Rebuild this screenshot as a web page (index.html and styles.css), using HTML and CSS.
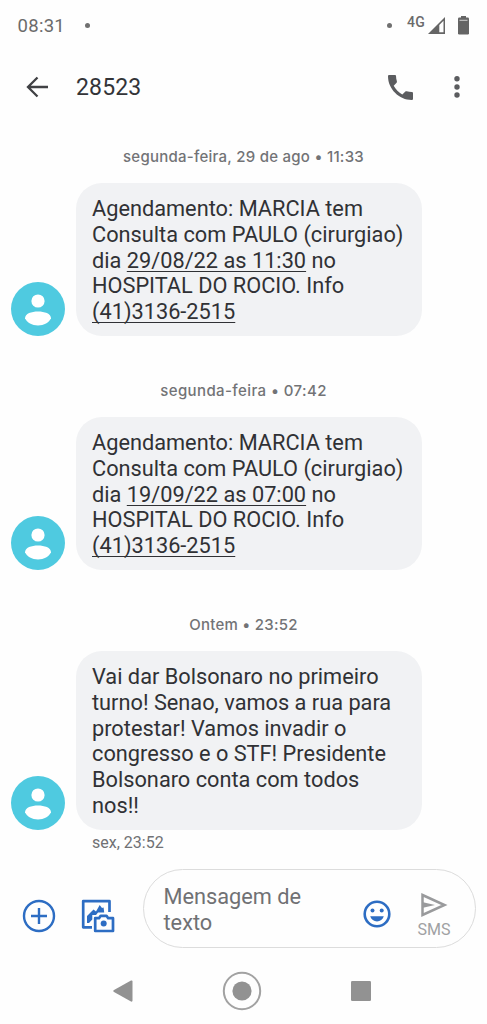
FILE: index.html
```html
<!DOCTYPE html>
<html lang="pt-BR">
<head>
<meta charset="utf-8">
<title>28523</title>
<link rel="stylesheet" href="styles.css">
</head>
<body>
<svg class="defs" width="0" height="0">
  <symbol id="person" viewBox="0 0 54 54">
    <circle cx="27" cy="27" r="27" fill="#4fcae0"/>
    <circle cx="27" cy="19" r="6.6" fill="#fff"/>
    <path d="M14 36.3C14 31.5 20.5 29.5 27 29.5s13 2 13 6.8C38 40.5 33 43.5 27 43.5s-11-3-13-7.2z" fill="#fff"/>
  </symbol>
</svg>
<div class="screen">
  <div class="status">
    <span class="clock">08:31</span>
    <i class="dot"></i>
    <i class="dot dot-right"></i>
    <span class="net">4G</span>
    <svg class="signal" width="18" height="17" viewBox="0 0 18 17"><path fill-rule="evenodd" d="M0 17L17 0V17zM11.3 8V15.3H15.5V3.8z" fill="#656565"/></svg>
    <svg class="battery" width="11" height="19" viewBox="0 0 11 19"><path d="M3 0h5v2H3z" fill="#656565"/><rect y="1.5" width="11" height="17" rx="1.2" fill="#656565"/><path d="M1.5 4.3h8" stroke="#d0d0d0"/></svg>
  </div>
  <header class="appbar">
    <svg width="24" height="22" viewBox="0 0 24 22"><path d="M22 11H2M11.5 1.5L2 11l9.5 9.5" fill="none" stroke="#404144" stroke-width="2.3"/></svg>
    <h1 class="title">28523</h1>
    <svg class="phone" width="25" height="25" viewBox="3 3 18 18"><path fill="#5b5c5f" d="M3.9 3H7.9C8.4 3 8.8 3.4 8.8 3.9 8.8 5.2 9 6.4 9.4 7.5 9.5 7.8 9.4 8.2 9.2 8.5L7.1 10.8C8.5 13.4 10.7 15.6 13.3 17L15.5 14.9C15.8 14.7 16.2 14.5 16.5 14.7 17.6 15.1 18.8 15.3 20.1 15.3 20.6 15.3 21 15.7 21 16.2V20.1C21 20.6 20.6 21 20.1 21 11 21 3 13 3 3.9 3 3.4 3.4 3 3.9 3z"/></svg>
    <svg class="more" width="6" height="24" viewBox="0 0 6 24"><g fill="#5b5c5f"><circle cx="3" cy="3.7" r="2.7"/><circle cx="3" cy="12" r="2.7"/><circle cx="3" cy="20" r="2.7"/></g></svg>
  </header>
  <main class="thread">
    <div class="date">segunda-feira, 29 de ago • 11:33</div>
    <div class="message">
      <svg class="avatar"><use href="#person"/></svg>
      <div class="bubble">Agendamento: MARCIA tem<br>Consulta com PAULO (cirurgiao)<br>dia <u>29/08/22 as 11:30</u> no<br>HOSPITAL DO ROCIO. Info<br><u>(41)3136-2515</u></div>
    </div>
    <div class="date date-short">segunda-feira • 07:42</div>
    <div class="message">
      <svg class="avatar"><use href="#person"/></svg>
      <div class="bubble">Agendamento: MARCIA tem<br>Consulta com PAULO (cirurgiao)<br>dia <u>19/09/22 as 07:00</u> no<br>HOSPITAL DO ROCIO. Info<br><u>(41)3136-2515</u></div>
    </div>
    <div class="date">Ontem • 23:52</div>
    <div class="message">
      <svg class="avatar"><use href="#person"/></svg>
      <div class="bubble">Vai dar Bolsonaro no primeiro<br>turno! Senao, vamos a rua para<br>protestar! Vamos invadir o<br>congresso e o STF! Presidente<br>Bolsonaro conta com todos<br>nos!!</div>
    </div>
    <div class="stamp">sex, 23:52</div>
  </main>
  <footer class="composer">
    <svg class="add" width="34" height="34" viewBox="0 0 34 34"><g fill="none" stroke="#2d6dc3" stroke-width="2.4"><circle cx="17" cy="17" r="15"/><path d="M17 9v16M9 17h16"/></g></svg>
    <svg class="gallery" width="34" height="34" viewBox="0 0 34 34"><g fill="none" stroke="#2d6dc3" stroke-width="2.7" stroke-linejoin="round"><path d="M28.5 13V2.2H2.2V28.3H11"/><path d="M14.2 19.2H18L19.7 16.8H25.5L27.2 19.2H32V32H14.2z"/></g><path d="M6 22V17L12.5 10.5 15 12.5 18.7 6 21 9 22.6 8.6 23.2 13.5H17L15 16H11.3V20.5L8 24H6z" fill="#2d6dc3"/><circle cx="22.7" cy="24.5" r="3" fill="#2d6dc3"/></svg>
    <div class="field">
      <div class="placeholder">Mensagem de<br>texto</div>
      <svg class="emoji" width="28" height="28" viewBox="0 0 28 28"><circle cx="14" cy="14" r="12.3" fill="#fff" stroke="#2d6dc3" stroke-width="2.6"/><g fill="#2d6dc3"><circle cx="9.5" cy="10.5" r="2"/><circle cx="18.7" cy="10.5" r="2"/><path d="M7.2 16.2H20.8C19.7 19.5 17.2 21.4 14 21.4S8.3 19.5 7.2 16.2z"/></g></svg>
      <div class="send">
        <svg width="28" height="24" viewBox="0 0 28 24"><path d="M2.5 2L24.5 12 2.5 22z" fill="none" stroke="#999a9c" stroke-width="2.5"/><path d="M2 9L15 12 2 15z" fill="#999a9c"/></svg>
        <span>SMS</span>
      </div>
    </div>
  </footer>
  <nav class="nav">
    <svg width="20" height="22" viewBox="0 0 20 22"><path d="M1 10L18 .5Q19.5 0 19.5 1.5V20.5Q19.5 22 18 21.5L1 12Q-.5 11 1 10z" fill="#929292"/></svg>
    <svg class="home" width="40" height="40" viewBox="0 0 40 40"><circle cx="20" cy="20" r="18.2" fill="none" stroke="#a2a2a2" stroke-width="2"/><circle cx="20" cy="20" r="9.6" fill="#929292"/></svg>
    <svg width="20" height="20" viewBox="0 0 20 20"><rect width="20" height="20" rx="1.3" fill="#929292"/></svg>
  </nav>
</div>
</body>
</html>
```

FILE: styles.css
```css
* { box-sizing: border-box; }
body { margin: 0; background: #fefefe; font-family: Roboto, sans-serif; }
svg { display: block; flex: none; }
.defs { position: absolute; }
.screen { width: 487px; height: 1024px; display: flex; flex-direction: column; overflow: hidden; }

.status { height: 50px; padding: 0 18px 0 17.5px; display: flex; align-items: center; color: #6b6b6b; flex: none; }
.clock { font-size: 18.5px; width: 67px; letter-spacing: .3px; padding-top: 1px; }
.dot { width: 5px; height: 5px; border-radius: 50%; background: #707070; }
.dot-right { margin-left: auto; }
.net { font-size: 14px; font-weight: 500; letter-spacing: .2px; margin: -6px 3px 0 15px; }
.signal { margin-right: 12px; }

.appbar { height: 74px; padding: 0 27px 0 26px; display: flex; align-items: center; flex: none; }
.title { margin: 0 auto 0 26px; font-size: 23px; font-weight: 400; letter-spacing: .15px; color: #333438; }
.phone { margin-right: 41px; }

.thread { padding-top: 22px; height: 741px; flex: none; }
.date { margin-bottom: 17px; text-align: center; font: 500 15px/21px Inter, sans-serif; height: 20px; letter-spacing: .25px; color: #727376; }
.date-short { letter-spacing: .4px; }
.message { display: flex; align-items: flex-end; margin-left: 11px; margin-bottom: 44px; }
.avatar { width: 54px; height: 54px; margin-right: 11px; }
.bubble { width: 346px; padding: 13px 16px 11px; border-radius: 26px; background: #f1f2f4; color: #303135; font-size: 21.75px; line-height: 25.8px; white-space: nowrap; }
.bubble u { text-decoration-thickness: 1.4px; text-underline-offset: 2.5px; text-decoration-skip-ink: none; }
.stamp { margin: -41px 0 0 92px; font-size: 16px; line-height: 20px; color: #707174; }

.composer { height: 90px; padding: 4px 11px 7px 22px; display: flex; align-items: flex-start; flex: none; }
.add { margin-top: 29.5px; margin-right: 25px; }
.gallery { margin-top: 29.5px; }
.field { width: 333px; height: 79px; margin-left: auto; padding-left: 19.5px; border: 1.5px solid #dcdcdc; border-radius: 40px; display: flex; align-items: center; }
.placeholder { width: 199px; padding-top: 2px; font-size: 21.75px; line-height: 25.8px; color: #707174; }
.emoji { margin-top: 11px; margin-right: 27px; }
.send { display: flex; flex-direction: column; align-items: center; font-size: 16px; line-height: 18px; color: #a0a1a3; padding-top: 14px; gap: 4px; }

.nav { height: 69px; padding: 3px 116px 0 113px; display: flex; align-items: center; justify-content: space-between; }
```
